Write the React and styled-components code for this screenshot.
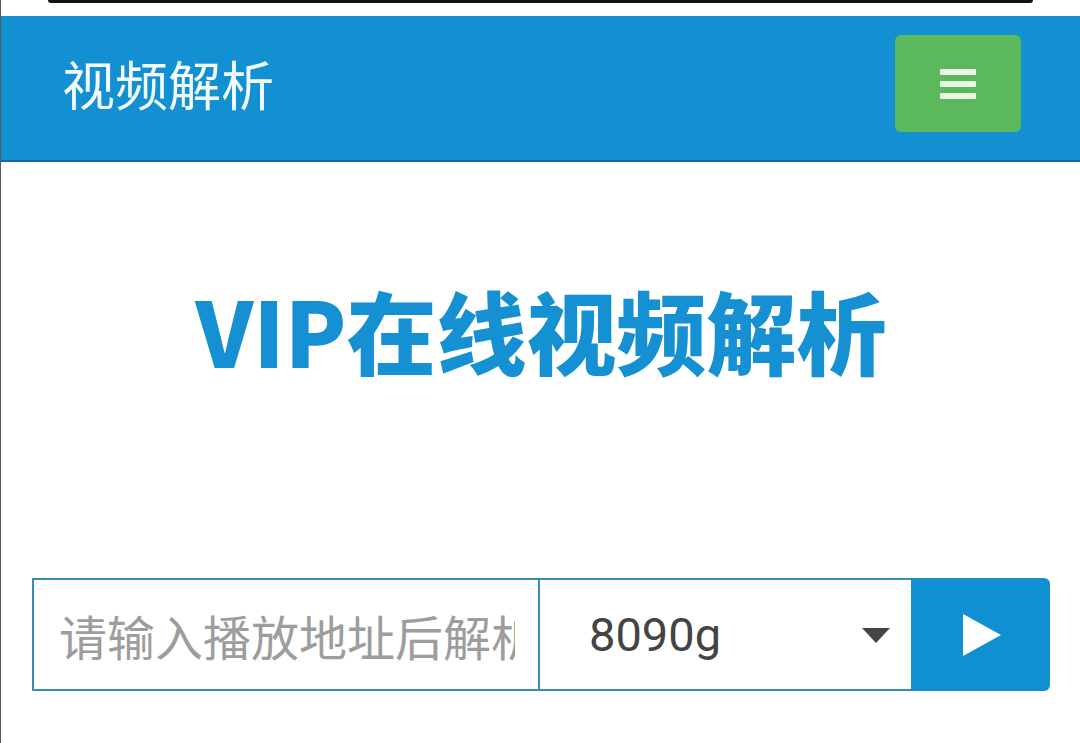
import React from "react";
import styled, { createGlobalStyle } from "styled-components";

const GlobalStyle = createGlobalStyle`
  html, body {
    margin: 0;
    padding: 0;
    background: #ffffff;
  }
  body {
    font-family: "Noto Sans CJK SC", "Noto Sans", Roboto, sans-serif;
  }
  * { box-sizing: border-box; }
`;

const Page = styled.div`
  min-height: 743px;
  background: #ffffff;
  border-left: 1px solid #5a5a5a;
`;

const TopEdge = styled.div`
  margin: 0 47px 13px 47px;
  height: 3px;
  background: #111111;
  border-radius: 0 0 4px 4px;
`;

const NavBar = styled.header`
  height: 146px;
  background: #1290d1;
  border-bottom: 2px solid #0d6b9c;
  display: flex;
  align-items: center;
  justify-content: space-between;
  padding: 0 59px 9px 61px;
`;

const Brand = styled.div`
  color: #f4fbff;
  font-size: 53px;
  font-weight: 400;
  line-height: 1;
  letter-spacing: 0;
`;

const Toggle = styled.button`
  width: 126px;
  height: 97px;
  background: #5cb85c;
  border: none;
  border-radius: 6px;
  display: flex;
  flex-direction: column;
  align-items: center;
  justify-content: center;
  gap: 6px;
  padding: 0;
`;

const IconBar = styled.span`
  display: block;
  width: 36px;
  height: 6px;
  background: #eaf5e6;
  border-radius: 1px;
`;

const Main = styled.main`
  display: flex;
  flex-direction: column;
  align-items: center;
  padding: 113px 30px 0 31px;
`;

const Heading = styled.h1`
  margin: 0;
  color: #1590d2;
  font-size: 90px;
  font-weight: 900;
  line-height: 108px;
  letter-spacing: 0;
  white-space: nowrap;
`;

const InputGroup = styled.form`
  margin-top: 195px;
  width: 100%;
  height: 113px;
  display: flex;
`;

const UrlInput = styled.input`
  width: 508px;
  height: 113px;
  flex: none;
  border: 2px solid #3a8cb4;
  padding: 0 23px 0 25px;
  font-family: "Noto Sans CJK SC", "Noto Sans", sans-serif;
  font-size: 48px;
  color: #333;
  background: #fff;
  outline: none;
  &::placeholder {
    color: #9d9d9d;
  }
`;

const SelectWrap = styled.div`
  position: relative;
  width: 371px;
  height: 113px;
  flex: none;
  border-top: 2px solid #3a8cb4;
  border-bottom: 2px solid #3a8cb4;
  background: #fff;
`;

const Select = styled.select`
  appearance: none;
  -webkit-appearance: none;
  width: 100%;
  height: 100%;
  border: none;
  background: transparent;
  padding: 0 0 0 49px;
  font-family: Roboto, "Noto Sans", sans-serif;
  font-size: 47px;
  color: #444444;
  outline: none;
`;

const Caret = styled.svg`
  position: absolute;
  right: 21px;
  top: 48px;
  pointer-events: none;
`;

const GoButton = styled.button`
  flex: 1;
  height: 113px;
  border: none;
  background: #1190d1;
  border-radius: 0 6px 6px 0;
  display: flex;
  align-items: center;
  justify-content: center;
  padding: 0 0 0 2px;
`;

export default function App() {
  return (
    <>
      <GlobalStyle />
      <Page>
        <TopEdge />
        <NavBar>
          <Brand>视频解析</Brand>
          <Toggle type="button" aria-label="菜单">
            <IconBar />
            <IconBar />
            <IconBar />
          </Toggle>
        </NavBar>
        <Main>
          <Heading>VIP在线视频解析</Heading>
          <InputGroup onSubmit={(e) => e.preventDefault()}>
            <UrlInput type="text" placeholder="请输入播放地址后解析" />
            <SelectWrap>
              <Select defaultValue="8090g">
                <option value="8090g">8090g</option>
              </Select>
              <Caret width="28" height="15" viewBox="0 0 28 15">
                <polygon points="0,0 28,0 14,15" fill="#444444" />
              </Caret>
            </SelectWrap>
            <GoButton type="submit" aria-label="解析">
              <svg width="38" height="42" viewBox="0 0 38 42">
                <polygon points="0,0 38,21 0,42" fill="#ffffff" />
              </svg>
            </GoButton>
          </InputGroup>
        </Main>
      </Page>
    </>
  );
}
